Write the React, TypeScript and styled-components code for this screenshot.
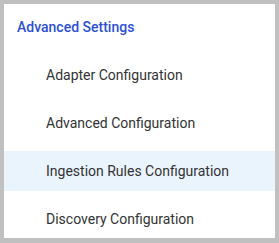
import React from "react";
import styled, { createGlobalStyle } from "styled-components";

const Global = createGlobalStyle`
  html, body { margin: 0; padding: 0; background: #c0c0c0; }
  body { font-family: Roboto, "Liberation Sans", sans-serif; }
`;

const Panel = styled.div`
  margin: 4px;
  width: 271px;
  height: 234px;
  background: #ffffff;
  overflow: hidden;
  box-sizing: border-box;
`;

const Header = styled.div`
  height: 44px;
  display: flex;
  align-items: center;
  padding-left: 13px;
  padding-top: 1px;
  box-sizing: border-box;
  color: #2b50d6;
  font-size: 14px;
  font-weight: 500;
`;

const List = styled.div`
  display: flex;
  flex-direction: column;
  gap: 8px;
  padding-top: 7px;
`;

const Item = styled.div<{ $active?: boolean }>`
  height: 40px;
  display: flex;
  align-items: center;
  padding-left: 42px;
  color: #333333;
  font-size: 14px;
  background: ${(p) => (p.$active ? "#eaf4fd" : "transparent")};
`;

const items = [
  "Adapter Configuration",
  "Advanced Configuration",
  "Ingestion Rules Configuration",
  "Discovery Configuration",
];

export default function App() {
  return (
    <>
      <Global />
      <Panel>
        <Header>Advanced Settings</Header>
        <List>
          {items.map((t, i) => (
            <Item key={t} $active={i === 2}>
              {t}
            </Item>
          ))}
        </List>
      </Panel>
    </>
  );
}
